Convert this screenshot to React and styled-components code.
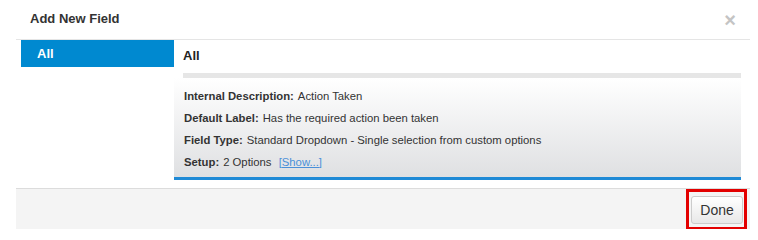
import styled, { createGlobalStyle } from "styled-components";

const GlobalStyle = createGlobalStyle`
  body {
    margin: 0;
    background: #fff;
    font-family: "Liberation Sans", Arial, sans-serif;
    color: #333;
  }
`;

const fields = [
  { label: "Internal Description:", value: "Action Taken" },
  { label: "Default Label:", value: "Has the required action been taken" },
  { label: "Field Type:", value: "Standard Dropdown - Single selection from custom options" },
];

const App = () => {
  return (
    <>
      <GlobalStyle />
      <Modal>
        <Header>
          <Title>Add New Field</Title>
          <Close>×</Close>
        </Header>
        <Body>
          <Sidebar>
            <Tab active>All</Tab>
          </Sidebar>
          <Main>
            <MainTitle>All</MainTitle>
            <Divider />
            <Panel>
              {fields.map((f) => (
                <Row key={f.label}>
                  <b>{f.label}</b>{f.value}
                </Row>
              ))}
              <Row>
                <b>Setup:</b>2 Options <ShowLink href="#">[Show...]</ShowLink>
              </Row>
            </Panel>
          </Main>
        </Body>
        <Footer>
          <DoneButton>Done</DoneButton>
        </Footer>
      </Modal>
    </>
  );
};

const Modal = styled.div`
  margin-left: 16px;
  width: 734px;
`;

const Header = styled.div`
  height: 39px;
  border-bottom: 1px solid #e5e5e5;
  display: flex;
  align-items: center;
  justify-content: space-between;
  padding: 0 14px;
`;

const Title = styled.h4`
  margin: 0;
  font-size: 13px;
  font-weight: bold;
  color: #333;
  position: relative;
  top: -1px;
`;

const Close = styled.span`
  font-size: 20px;
  font-weight: bold;
  color: #c4c4c4;
  line-height: 1;
`;

const Body = styled.div`
  display: flex;
  padding: 0 9px 8px 5px;
`;

const Sidebar = styled.div`
  width: 153px;
`;

const Tab = styled.div`
  height: 27px;
  line-height: 27px;
  padding-left: 16px;
  font-size: 13px;
  font-weight: bold;
  color: ${(p) => (p.active ? "#fff" : "#333")};
  background: ${(p) => (p.active ? "#0089d0" : "transparent")};
`;

const Main = styled.div`
  flex: 1;
  display: flex;
  flex-direction: column;
`;

const MainTitle = styled.div`
  height: 33px;
  line-height: 31px;
  padding-left: 9px;
  font-size: 13px;
  font-weight: bold;
  color: #222;
`;

const Divider = styled.div`
  height: 5px;
  margin-left: 9px;
  background: #e6e6e6;
`;

const Panel = styled.div`
  padding: 7px 10px 4px;
  background: linear-gradient(#fff, #dfe0e2);
  border-bottom: 3px solid #1f8ad6;
`;

const Row = styled.div`
  height: 22px;
  line-height: 22px;
  font-size: 11.3px;
  color: #333;

  b {
    margin-right: 4px;
  }
`;

const ShowLink = styled.a`
  margin-left: 4px;
  color: #4a90d9;
  text-decoration: underline;
`;

const Footer = styled.div`
  border-top: 1px solid #dcdcdc;
  background: #f4f4f4;
  height: 41px;
  display: flex;
  align-items: flex-start;
  justify-content: flex-end;
  padding: 7px 7px 0 0;
  box-sizing: border-box;
`;

const DoneButton = styled.button`
  position: relative;
  width: 52px;
  height: 28px;
  border: 1px solid #ccc;
  border-radius: 3px;
  background: linear-gradient(#fff, #e8e8e8);
  font-family: "Liberation Sans", Arial, sans-serif;
  font-size: 14px;
  color: #333;
  padding: 0;
  cursor: pointer;

  &::after {
    content: "";
    position: absolute;
    top: -8px;
    left: -6px;
    right: -5px;
    bottom: -7px;
    border: 3px solid #e30000;
  }
`;

export default App;
